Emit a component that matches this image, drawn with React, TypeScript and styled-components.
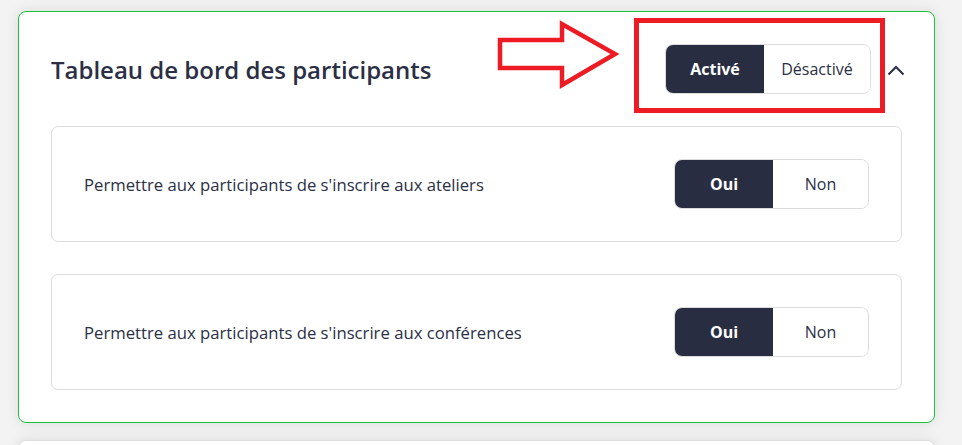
import React, { useState } from 'react'
import styled, { createGlobalStyle } from 'styled-components'

const GlobalStyle = createGlobalStyle`
  html, body {
    margin: 0;
    padding: 0;
    overflow: hidden;
    background: #f3f3f3;
    font-family: 'Open Sans', 'Liberation Sans', sans-serif;
  }
  * {
    box-sizing: border-box;
  }
`

const Page = styled.div`
  display: flex;
  flex-direction: column;
  gap: 17px;
  padding: 11px 27px 0 18px;
  height: 445px;
  overflow: hidden;
`

const Card = styled.section<{ $highlight?: boolean }>`
  position: relative;
  display: flex;
  flex-direction: column;
  gap: 32px;
  padding: 32px;
  min-height: 60px;
  background: #fff;
  border: 1px solid ${({ $highlight }) => ($highlight ? '#1ec238' : '#dedede')};
  border-radius: 8px;
  box-shadow: 0 0 14px rgba(0, 0, 0, 0.1);
  flex-shrink: 0;
`

const Header = styled.header`
  display: flex;
  align-items: center;
  justify-content: space-between;
`

const Title = styled.h2`
  margin: 0;
  font-size: 24px;
  font-weight: 600;
  color: #2b2f45;
`

const HeaderActions = styled.div`
  display: flex;
  align-items: center;
  gap: 16px;
  margin-right: -3px;
`

const Toggle = styled.div`
  display: flex;
  border: 1px solid #dcdcdc;
  border-radius: 8px;
  overflow: hidden;
  height: 50px;
`

const ToggleOption = styled.button<{ $active: boolean; $width: number }>`
  width: ${({ $width }) => $width}px;
  border: none;
  margin: 0;
  padding: 0;
  font-family: inherit;
  font-size: 16px;
  font-weight: ${({ $active }) => ($active ? 700 : 500)};
  color: ${({ $active }) => ($active ? '#fff' : '#2b2f45')};
  background: ${({ $active }) => ($active ? '#292d42' : '#fff')};
  cursor: pointer;
`

const Chevron = styled.button`
  display: flex;
  border: none;
  background: none;
  padding: 0;
  margin-top: 2px;
  cursor: pointer;
`

const Option = styled.div`
  display: flex;
  align-items: center;
  justify-content: space-between;
  padding: 32px;
  border: 1px solid #dcdcdc;
  border-radius: 7px;
`

const OptionLabel = styled.span`
  font-size: 16.7px;
  color: #2b2f45;
`

const Highlight = styled.div`
  position: absolute;
  left: 615px;
  top: 6px;
  width: 251px;
  height: 95px;
  border: 5px solid #ed1c24;
  pointer-events: none;
`

const Arrow = styled.svg`
  position: absolute;
  left: 471px;
  top: 2px;
  pointer-events: none;
`

const Segmented: React.FC<{
  options: [string, string]
  widths: [number, number]
}> = ({ options, widths }) => {
  const [active, setActive] = useState(0)
  return (
    <Toggle>
      {options.map((label, i) => (
        <ToggleOption
          key={label}
          $active={active === i}
          $width={widths[i]}
          onClick={() => setActive(i)}
        >
          {label}
        </ToggleOption>
      ))}
    </Toggle>
  )
}

const settings = [
  "Permettre aux participants de s'inscrire aux ateliers",
  "Permettre aux participants de s'inscrire aux conférences",
]

export default function App() {
  return (
    <>
      <GlobalStyle />
      <Page>
        <Card $highlight>
          <Header>
            <Title>Tableau de bord des participants</Title>
            <HeaderActions>
              <Segmented options={['Activé', 'Désactivé']} widths={[98, 106]} />
              <Chevron aria-label="Réduire">
                <svg width="18" height="12" viewBox="0 0 18 12">
                  <polyline
                    points="1.5,10.5 9,3 16.5,10.5"
                    fill="none"
                    stroke="#2b2f45"
                    strokeWidth="2"
                  />
                </svg>
              </Chevron>
            </HeaderActions>
          </Header>
          {settings.map((label) => (
            <Option key={label}>
              <OptionLabel>{label}</OptionLabel>
              <Segmented options={['Oui', 'Non']} widths={[98, 95]} />
            </Option>
          ))}
          <Highlight />
          <Arrow width="140" height="80" viewBox="0 0 140 80">
            <polygon
              points="10,26 72,26 72,10 125,40 72,71 72,54 10,54"
              fill="none"
              stroke="#ed1c24"
              strokeWidth="4.5"
            />
          </Arrow>
        </Card>
        <Card />
      </Page>
    </>
  )
}
